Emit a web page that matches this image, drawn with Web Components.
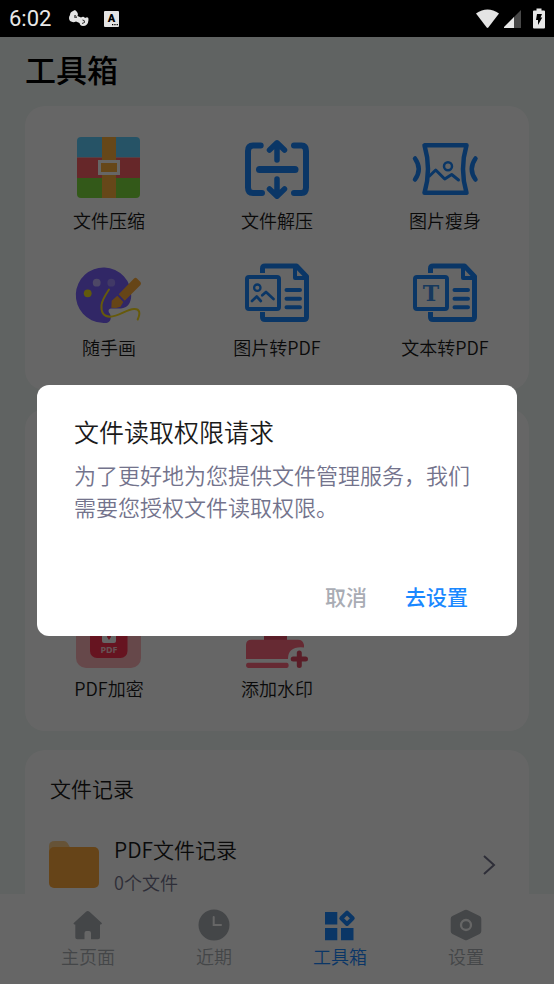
<!DOCTYPE html>
<html lang="zh-CN">
<head>
<meta charset="utf-8">
<meta name="viewport" content="width=device-width, initial-scale=1">
<title>工具箱</title>
<style>
  :root {
    --page: #f0f7f4;
    --ink: #1a1a1a;
    --muted: #73738c;
    --idle: #aaafb4;
    --blue: #1a88ff;
    --font: "Noto Sans CJK SC", "Noto Sans", sans-serif;
  }
  html, body { margin: 0; height: 100%; }
  body { font-family: var(--font); font-weight: 350; color: var(--ink); background: var(--page); overflow: hidden; }
</style>
</head>
<body>
<app-shell>
  <status-bar slot="status"></status-bar>
  <tool-card>
    <tool-item icon="zip">文件压缩</tool-item>
    <tool-item icon="unzip">文件解压</tool-item>
    <tool-item icon="slim">图片瘦身</tool-item>
    <tool-item icon="paint">随手画</tool-item>
    <tool-item icon="image-pdf">图片转PDF</tool-item>
    <tool-item icon="text-pdf">文本转PDF</tool-item>
  </tool-card>
  <tool-card second-row>
    <tool-item icon="lock">PDF加密</tool-item>
    <tool-item icon="stamp">添加水印</tool-item>
  </tool-card>
  <record-card>
    <span slot="title">文件记录</span>
    <span slot="name">PDF文件记录</span>
    <span slot="count">0个文件</span>
  </record-card>
  <tab-bar slot="tabs">
    <tab-link icon="home">主页面</tab-link>
    <tab-link icon="clock">近期</tab-link>
    <tab-link icon="grid" active>工具箱</tab-link>
    <tab-link icon="gear">设置</tab-link>
  </tab-bar>
  <permission-dialog slot="overlay">
    <span slot="title">文件读取权限请求</span>
    为了更好地为您提供文件管理服务，我们需要您授权文件读取权限。
    <span slot="cancel">取消</span>
    <span slot="confirm">去设置</span>
  </permission-dialog>
</app-shell>

<script>
const docShape = `
  <g fill="none" stroke="#1a88ff" stroke-linejoin="round">
    <path stroke-width="5" d="M17.500 10V5.500Q17.500 3 20 3H51.500L61.500 13.500V54Q61.500 56.500 59 56.500H20Q17.500 56.500 17.500 54V49"/>
    <path stroke-width="4" d="M50 4V15H61"/>
    <path stroke-width="4" stroke-linecap="round" d="M41.500 27H55M41.500 35.700H55M41.500 44.300H55"/>
    <rect x="2" y="14" width="32" height="32" rx="2" stroke-width="4"/>
  </g>`;

const ICONS = {
  zip: `<svg viewBox="0 0 64 64"><clipPath id="c"><rect y="1" width="63" height="61" rx="4"/></clipPath>
    <g clip-path="url(#c)"><path fill="#5fd0ff" d="M0 0h64v21.500H0z"/><path fill="#ff6266" d="M0 21.500h64v20.500H0z"/><path fill="#7fdf3f" d="M0 42h64v21H0z"/><path fill="#ffb13f" d="M25 0h14v64H25z"/></g>
    <rect x="22.500" y="25.500" width="19" height="12" fill="#ffb13f" stroke="#fff" stroke-width="3"/></svg>`,
  unzip: `<svg viewBox="0 0 64 64"><g fill="none" stroke="#1a88ff" stroke-linecap="round" stroke-linejoin="round">
    <path stroke-width="6" d="M15.700 9.500H8Q3 9.500 3 15V51.500Q3 57 8 57H17M49 9.500H56.500Q61 9.500 61 15V51.500Q61 57 56.500 57H49"/>
    <path stroke-width="7" d="M14.500 33.500H50"/>
    <path stroke-width="5.500" d="M32 7V24M24.500 14L32 6.800L39.500 14M32 43V60M24.500 53L32 60.200L39.500 53"/></g></svg>`,
  slim: `<svg viewBox="0 0 64 64"><g fill="none" stroke="#1a88ff" stroke-linecap="round" stroke-linejoin="round">
    <path stroke-width="4.500" d="M11.500 9.300H53.500Q46.500 33 53.500 56.800H11.500Q18.500 33 11.500 9.300Z"/>
    <path stroke-width="4.500" d="M2 22.500Q9.500 33 2 43.500M62.500 22.500Q55 33 62.500 43.500"/>
    <circle cx="35" cy="30.300" r="4" stroke-width="2.500"/>
    <path stroke-width="3" d="M16.500 40L22.700 34L31.700 43L38.700 38.500L45.500 44"/></g></svg>`,
  paint: `<svg viewBox="0 0 64 64"><path fill="#7a62ff" d="M31 59.500C29 60.200 27 60 25 59.800A27.700 27.700 0 1 1 54.200 33C54 40 50.500 45 44 45.500H34C31 46 31 48.500 33 51C34.500 54 34 58 31 59.500Z"/>
    <circle cx="19.700" cy="19.700" r="3.900" fill="#c2b4ff"/><circle cx="34.300" cy="19.700" r="3.900" fill="#a28fff"/><circle cx="10.700" cy="30.300" r="3.900" fill="#f5e11e"/>
    <path fill="none" stroke="#ffe01e" stroke-width="2" stroke-linecap="round" d="M32 26.500C29 31 25 37 24.500 42C24 49 26 53.500 33 53.700C42 53.500 49 46.500 57 46C63 45.700 63.500 50 60.700 56.500"/>
    <path fill="#ffad3b" d="M57 15.500Q58.500 14 60 15.500L63.500 19Q64.500 20.500 63.500 22L47.700 37.700L41.700 31.200ZM40.300 32.700L46.300 39L43.500 43.700L39 45L34.300 44.700L34.700 37.700Z"/></svg>`,
  'image-pdf': `<svg viewBox="0 0 64 64">${docShape}<g fill="none" stroke="#1a88ff" stroke-linecap="round" stroke-linejoin="round"><circle cx="12.300" cy="24.700" r="3.200" stroke-width="2.300"/><path stroke-width="2.700" d="M7 38L11.700 33.500L15.800 38M17.300 32.300L21 29L28.500 36"/></g></svg>`,
  'text-pdf': `<svg viewBox="0 0 64 64">${docShape}<text x="18" y="38" text-anchor="middle" font-family="DejaVu Serif, serif" font-weight="700" font-size="22" fill="#3a8fe8">T</text></svg>`,
  lock: `<svg viewBox="0 0 64 64"><rect x="-1" y="-1" width="65" height="65" rx="10" fill="#ffb3ba"/><rect x="13" y="10" width="37.500" height="44" rx="7" fill="#ff3250"/>
    <rect x="25" y="25" width="14" height="14" rx="2" fill="#fff"/><path fill="#ff3250" d="M30 29h4v4l-2 3l-2-3z"/>
    <text x="32" y="49" text-anchor="middle" font-family="Noto Sans, sans-serif" font-size="9" font-weight="700" fill="#ffd0d5">PDF</text></svg>`,
  stamp: `<svg viewBox="0 0 64 64"><path fill="#e24d64" d="M19 22h23v14H19z"/><path fill="#ff6a80" d="M1 55V41Q1 35.700 6.500 35.700H53Q58 35.700 59 41V43.500Q43 42 43 55ZM3 58.700H42Q43.700 58.700 43.700 61.300T42 64H3Q1 64 1 61.300T3 58.700Z"/>
    <path fill="none" stroke="#e24d64" stroke-width="5" stroke-linecap="round" d="M54.300 49V61.500M48.200 55H60.500"/></svg>`,
  folder: `<svg viewBox="0 0 50 48"><path fill="#ffd08a" d="M0 12V5Q0 0 6 0H15Q17 0 18.500 2L22 8V12Z"/><rect y="6" width="50" height="41" rx="5" fill="#ffaa3d"/></svg>`,
  chevron: `<svg viewBox="0 0 12 20"><path fill="none" stroke="#73738c" stroke-width="2" d="M1 1L11 10L1 19"/></svg>`,
  home: `<svg viewBox="0 0 32 32"><path fill="#aaafb4" d="M14 2.800Q15.700 1.300 17.500 2.800L29.500 13.700Q30.700 15 29 15.500H28V28.500Q28 30.300 26 30.300H19V24Q19 22 17 22H14.500Q12.500 22 12.500 24V30.300H5.300Q3.300 30.300 3.300 28.500V15.500H2.300Q.7 15 2 13.700Z"/></svg>`,
  clock: `<svg viewBox="0 0 32 32"><circle cx="16" cy="16" r="15.500" fill="#aaafb4"/><path fill="none" stroke="#fff" stroke-width="2" stroke-linecap="round" d="M15.700 8V16H23"/></svg>`,
  grid: `<svg viewBox="0 0 32 32"><path fill="#1a88ff" d="M1 3h12.300v12.500H1zM1 19h12.300v12.300H1zM17 19h12.500v12.300H17z"/><path fill="none" stroke="#1a88ff" stroke-width="4" stroke-linejoin="round" d="M23 3.700L28.700 9.300L23 15L17.300 9.300Z"/></svg>`,
  gear: `<svg viewBox="0 0 32 32"><path fill="#aaafb4" stroke="#aaafb4" stroke-width="6" stroke-linejoin="round" d="M16 3.700L28.300 9.700V22.300L16 28.300L3.700 22.300V9.700Z"/><circle cx="16" cy="16" r="5" fill="none" stroke="#fff" stroke-width="2.300"/></svg>`
};

const define = (name, css, html) => customElements.define(name, class extends HTMLElement {
  constructor() {
    super();
    const t = document.createElement('template');
    t.innerHTML = `<style>*{box-sizing:border-box}button{font:inherit;color:inherit;background:none;border:0;padding:0;cursor:pointer}svg{display:block;width:100%;height:100%;overflow:visible}${css}</style>` +
      (typeof html === 'function' ? html(this) : html);
    this.attachShadow({ mode: 'open' }).append(t.content.cloneNode(true));
  }
});

define('status-bar', `
  :host { display: flex; align-items: center; justify-content: space-between; height: 37px; padding: 0 9px; background: #000; color: #e8e8e8; font: 400 22px/37px Roboto, sans-serif; }
  div { display: flex; align-items: center; }
  .left { gap: 18px; }
  .left .a { width: 20px; height: 17px; } .left .b { width: 15px; height: 16px; margin-left: -3px; }
  .wifi { width: 23px; height: 20px; margin-right: 5px; } .cell { width: 18px; height: 20px; margin-right: 11px; } .bat { width: 12px; height: 20px; }
`, `
  <div class="left"><span>6:02</span>
    <span class="a"><svg viewBox="0 0 20 17"><path fill="#e4e4e4" d="M1 5Q1 2 4 1L6 0Q10 3 8.500 6L12 7.500Q14.500 6 16 8Q20 6 19.500 10Q19 16 14 16Q11 16 10.500 13L7 11.500Q4 13 1 11Q-1 8 1 5Z"/><path fill="none" stroke="#000" stroke-width=".8" d="M5 6Q7 4.500 7.500 7.500L5 7M13.500 10Q16 10 15.500 12.500L13 13.500"/></svg></span>
    <span class="b"><svg viewBox="0 0 15 16"><rect width="15" height="16" rx="1" fill="#e4e4e4"/><text x="7.500" y="11" text-anchor="middle" font-family="Roboto, sans-serif" font-weight="900" font-size="11" fill="#000">A</text><path fill="#000" d="M8 13h1.300v1.300H8zM10.300 13h1.300v1.300h-1.300zM12.600 13h1.300v1.300h-1.300z"/></svg></span>
  </div>
  <div>
    <span class="wifi"><svg viewBox="0 0 23 20"><path fill="#e4e4e4" d="M0 4.500Q11.500-3.500 23 4.500L12.300 18.500Q11.500 19.300 10.700 18.500Z"/></svg></span>
    <span class="cell"><svg viewBox="0 0 18 20"><path fill="#484848" d="M17 1V19H9V9Z"/><path fill="#e8e8e8" d="M10 8V19H0V18Z"/></svg></span>
    <span class="bat"><svg viewBox="0 0 12 20"><path fill="#e8e8e8" d="M3.500-.500h5v2H11q1 0 1 1V18.500q0 1-1 1H1q-1 0-1-1V2.500q0-1 1-1h2.500z"/><path fill="#000" d="M4 5H9L7.500 8.500H9.300L5 16V11H3Z"/></svg></span>
  </div>`);

define('app-shell', `
  :host { display: flex; flex-direction: column; height: 100vh; }
  .stage { position: relative; flex: 1; min-height: 0; display: flex; flex-direction: column; }
  main { flex: 1; min-height: 0; overflow: hidden; padding: 0 25px; display: flex; flex-direction: column; gap: 19px; }
  h1 { margin: 0; padding-top: 14px; font-size: 31px; line-height: 36px; font-weight: 500; color: #000; }
`, `<slot name="status"></slot>
  <div class="stage"><main><h1>工具箱</h1><slot></slot></main><slot name="tabs"></slot><slot name="overlay"></slot></div>`);

define('tool-card', `
  :host { display: grid; flex: none; grid-template-columns: repeat(3, 1fr); row-gap: 30px; padding: 30px 0; background: #fff; border-radius: 20px; }
  :host([second-row]) { grid-template-rows: 97px auto; padding-top: 68px; }
  :host([second-row]) ::slotted(*) { grid-row: 2; }
`, `<slot></slot>`);

define('tool-item', `
  :host { display: block; }
  button { display: flex; flex-direction: column; align-items: center; gap: 7px; width: 100%; font-size: 18px; line-height: 26px; }
  .icon { width: 64px; height: 64px; }
`, el => `<button type="button"><span class="icon">${ICONS[el.getAttribute('icon')]}</span><span><slot></slot></span></button>`);

define('record-card', `
  :host { display: block; flex: none; padding: 22px 24px; background: #fff; border-radius: 20px; }
  h2 { margin: 0 0 28px; padding-left: 1px; font-size: 21px; line-height: 32px; font-weight: inherit; }
  button { display: flex; align-items: center; gap: 15px; width: 100%; text-align: left; padding-right: 10px; }
  .folder { width: 50px; height: 48px; }
  .text { flex: 1; display: grid; }
  .name { font-size: 21px; line-height: 34px; }
  .count { font-size: 18px; line-height: 32px; color: var(--muted); }
  .chevron { width: 12px; height: 20px; }
`, `<h2><slot name="title"></slot></h2>
  <button type="button"><span class="folder">${ICONS.folder}</span>
  <span class="text"><span class="name"><slot name="name"></slot></span><span class="count"><slot name="count"></slot></span></span>
  <span class="chevron">${ICONS.chevron}</span></button>`);

define('tab-bar', `
  :host { display: block; background: #fff; }
  nav { display: grid; grid-template-columns: repeat(4, 1fr); padding: 15px 25px; }
`, `<nav><slot></slot></nav>`);

define('tab-link', `
  :host { display: block; color: var(--idle); }
  :host([active]) { color: var(--blue); }
  a { display: flex; flex-direction: column; align-items: center; gap: 2px; color: inherit; text-decoration: none; font-size: 18px; line-height: 26px; }
  .icon { width: 32px; height: 32px; }
`, el => `<a href="#${el.getAttribute('icon')}"><span class="icon">${ICONS[el.getAttribute('icon')]}</span><span><slot></slot></span></a>`);

define('permission-dialog', `
  :host { position: absolute; inset: 0; display: flex; align-items: center; padding: 0 37px; background: rgba(0,0,0,.6); }
  section { flex: 1; padding: 28px 37px 24px; background: #fff; border-radius: 12px; }
  h2 { margin: 0 0 9px; font-size: 25px; line-height: 36px; font-weight: inherit; }
  p { margin: 0 0 58px; font-size: 22px; line-height: 32px; color: var(--muted); }
  footer { display: flex; justify-content: flex-end; gap: 38px; padding-right: 12px; font-size: 21px; line-height: 32px; font-weight: 500; }
  .cancel { color: #a9acb4; } .confirm { color: var(--blue); }
`, `<section role="dialog" aria-modal="true" aria-labelledby="t"><h2 id="t"><slot name="title"></slot></h2><p><slot></slot></p>
  <footer><button class="cancel" type="button"><slot name="cancel"></slot></button><button class="confirm" type="button"><slot name="confirm"></slot></button></footer></section>`);
</script>
</body>
</html>
